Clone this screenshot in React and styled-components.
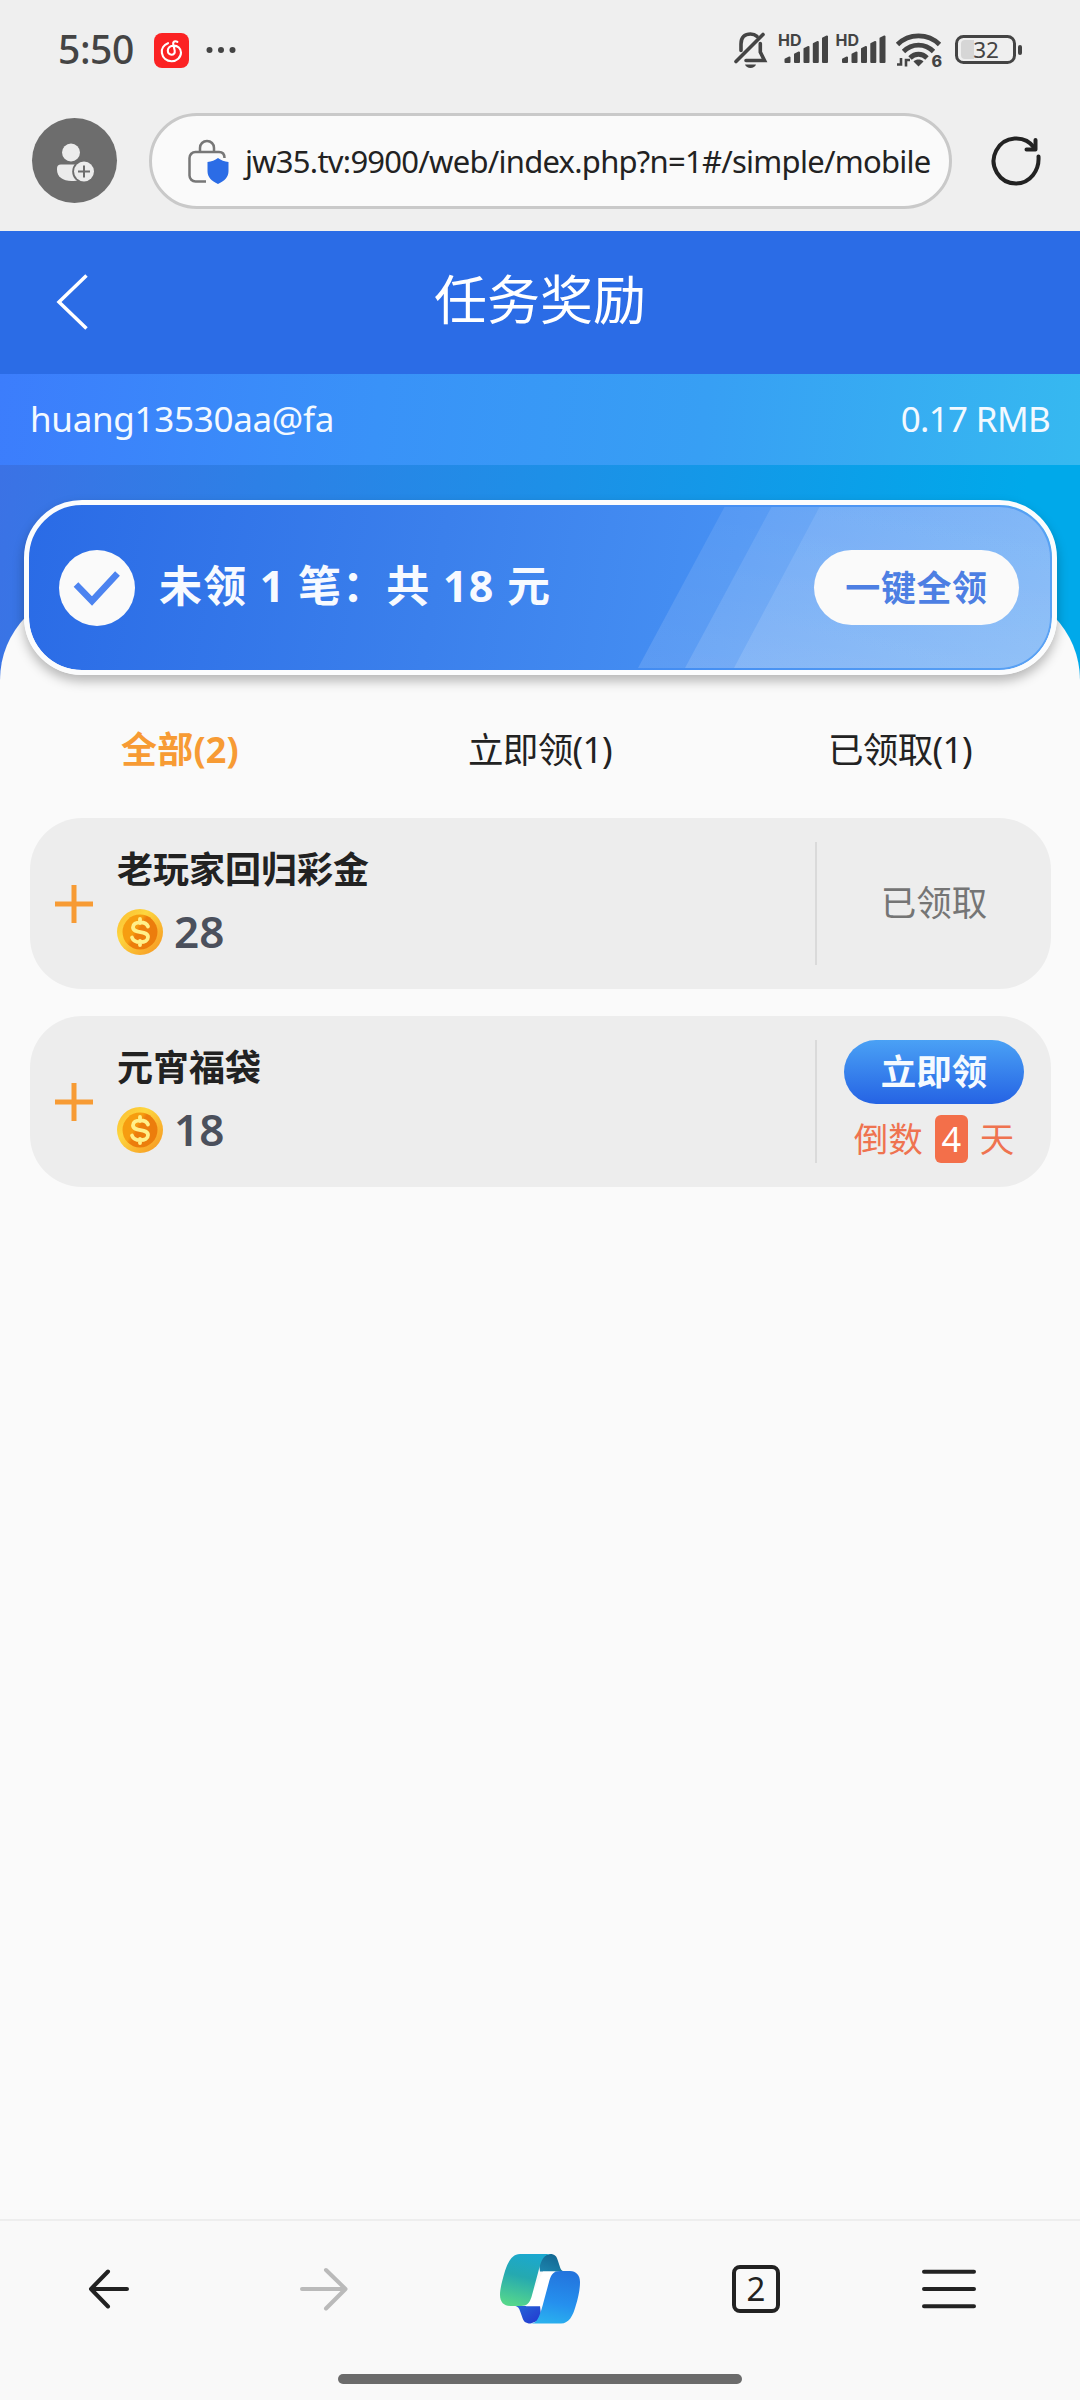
import styled, { createGlobalStyle } from 'styled-components';

const GlobalStyle = createGlobalStyle`
  * {
    box-sizing: border-box;
  }

  body {
    margin: 0;
    background: #fafafa;
    color: #222;
    font-family: 'Noto Sans', 'Noto Sans CJK SC', sans-serif;
  }

  svg {
    display: block;
    flex: none;
  }

  button {
    border: none;
    padding: 0;
    background: none;
    font-family: inherit;
    color: inherit;
  }
`;

const Screen = styled.div`
  width: 1080px;
  height: 2400px;
  display: flex;
  flex-direction: column;
  overflow: hidden;
  background: #fafafa;
`;

const StatusBar = styled.div`
  height: 100px;
  flex: none;
  display: flex;
  align-items: center;
  padding: 0 57px 0 58px;
  background: #efefef;
`;

const Clock = styled.span`
  width: 96px;
  margin-top: -2px;
  font-size: 39px;
  font-weight: 500;
  line-height: 40px;
  color: #444;
  letter-spacing: -0.4px;
  white-space: nowrap;
`;

const StatusIcons = styled.div`
  margin-left: auto;
`;

const BrowserBar = styled.div`
  height: 131px;
  flex: none;
  display: flex;
  align-items: flex-start;
  padding: 13px 39px 0 32px;
  background: #efefef;
`;

const Avatar = styled.button`
  width: 85px;
  height: 85px;
  margin-top: 5px;
  border-radius: 50%;
  background: #6d6d6d;
`;

const AddressField = styled.div`
  width: 803px;
  height: 96px;
  margin-left: 32px;
  padding-left: 34px;
  display: flex;
  align-items: center;
  border: 3px solid #c9c9c9;
  border-radius: 48px;
  background: #fafafa;
`;

const Url = styled.span`
  margin-left: 16px;
  font-size: 31px;
  color: #222;
  letter-spacing: -0.75px;
  white-space: nowrap;
`;

const Reload = styled.button`
  margin: 23px 0 0 auto;
`;

const PageHeader = styled.header`
  height: 143px;
  flex: none;
  display: grid;
  grid-template-columns: 150px 1fr 150px;
  align-items: center;
  background: #2b6ce6;
  color: #fff;
`;

const BackButton = styled.button`
  padding: 0 0 2px 54px;
`;

const PageTitle = styled.h1`
  margin: 0 0 5px;
  text-align: center;
  font-size: 53px;
  font-weight: 400;
  line-height: 60px;
`;

const AccountBar = styled.div`
  height: 91px;
  flex: none;
  display: flex;
  justify-content: space-between;
  align-items: center;
  padding: 0 30px 3px;
  background: linear-gradient(97deg, #3c7dfc 0%, #3992f8 35%, #379ff4 65%, #36b9f0 100%);
  color: #f3f9ff;
  font-size: 35px;
`;

const AccountName = styled.span`
  letter-spacing: -0.3px;
`;

const Balance = styled.span`
  letter-spacing: -0.7px;
`;

const Stage = styled.main`
  flex: 1;
  padding-top: 35px;
  background: linear-gradient(100deg, #3b72e5 0%, #1d90e7 50%, #00a9ea 92%) 0 0 / 100% 230px no-repeat;
`;

const Summary = styled.section`
  position: relative;
  z-index: 1;
  width: 1033px;
  height: 175px;
  margin-left: 24px;
  padding: 0 33px 0 30px;
  display: flex;
  align-items: center;
  border: 5px solid #fbfcfd;
  border-radius: 58px;
  background: linear-gradient(100deg, #2a6be6 0%, #3b80ec 40%, #4690f3 68%, #5aa2f4 100%);
  background-clip: padding-box;
  box-shadow: 0 6px 12px rgba(0, 0, 0, 0.28);
`;

const Stripes = styled.svg`
  position: absolute;
  top: 2px;
  right: 2px;
  border-radius: 0 51px 51px 0;
`;

const SummaryText = styled.strong`
  margin: 0 0 4px 24px;
  font-size: 43px;
  font-weight: 700;
  line-height: 60px;
  color: #f7faff;
  letter-spacing: 1.2px;
  white-space: nowrap;
`;

const ClaimAll = styled.button`
  position: relative;
  width: 205px;
  height: 75px;
  margin-left: auto;
  padding-bottom: 5px;
  border-radius: 38px;
  background: #fafafa;
  color: #4d7fe3;
  font-size: 35px;
  font-weight: 700;
  letter-spacing: 0.6px;
`;

const Sheet = styled.section`
  height: 1629px;
  margin-top: -85px;
  padding-top: 85px;
  border-radius: 90px 90px 0 0;
  background: #fafafa;
`;

const Tabs = styled.nav`
  height: 143px;
  padding-top: 2px;
  display: grid;
  grid-template-columns: repeat(3, 1fr);
  align-items: center;
`;

const Tab = styled.button`
  font-size: ${({ $active }) => ($active ? 36 : 35.5)}px;
  font-weight: ${({ $active }) => ($active ? 700 : 400)};
  color: ${({ $active }) => ($active ? '#f79b34' : '#222')};
  letter-spacing: ${({ $active }) => ($active ? 0.2 : -0.7)}px;
`;

const TaskList = styled.ul`
  margin: 0;
  padding: 0 29px 0 30px;
  display: grid;
  gap: 27px;
  list-style: none;
`;

const Task = styled.li`
  height: 171px;
  display: flex;
  align-items: center;
  padding-left: 25px;
  border-radius: 52px;
  background: #ededed;
`;

const TaskBody = styled.div`
  height: 171px;
  padding-top: 27px;
  margin-left: 24px;
  flex: 1;
`;

const TaskName = styled.div`
  font-size: 36px;
  font-weight: 600;
  line-height: 44px;
  font-family: 'Noto Sans CJK SC', sans-serif;
`;

const Reward = styled.div`
  display: flex;
  align-items: center;
  gap: 11px;
  margin-top: 20px;
  height: 46px;
`;

const Amount = styled.span`
  font-size: 44px;
  font-weight: 600;
  line-height: 46px;
  padding-bottom: 2px;
  color: #4b505c;
`;

const TaskAction = styled.div`
  width: 236px;
  height: 123px;
  display: flex;
  flex-direction: column;
  align-items: center;
  justify-content: center;
  border-left: 2px solid #dadada;
`;

const Claimed = styled.span`
  font-size: 35.5px;
  line-height: 40px;
  color: #757575;
  padding-bottom: 3px;
`;

const Claim = styled.button`
  width: 180px;
  height: 67px;
  padding-bottom: 6px;
  border-radius: 34px;
  background: linear-gradient(#4aa1f5, #2563e4);
  color: #f5faff;
  font-size: 35.5px;
  font-weight: 700;
`;

const Countdown = styled.div`
  height: 48px;
  margin-top: 11px;
  display: flex;
  align-items: center;
  gap: 12px;
  font-size: 34.5px;
  line-height: 48px;
  color: #ef7350;
`;

const Days = styled.span`
  width: 33px;
  height: 48px;
  border-radius: 6px;
  background: #f36f4a;
  color: #fff;
  text-align: center;
`;

const NavBar = styled.footer`
  height: 181px;
  flex: none;
  display: flex;
  flex-direction: column;
  align-items: center;
  border-top: 2px solid #eee;
  background: #f9f9f9;
`;

const NavItems = styled.div`
  width: 100%;
  height: 135px;
  padding: 0 104px 0 88px;
  display: flex;
  align-items: center;
`;

const NavButton = styled.button`
  margin-left: ${({ $gap }) => $gap || 0}px;
`;

const TabCount = styled.span`
  width: 48px;
  height: 48px;
  display: grid;
  place-items: center;
  border: 4px solid #222;
  border-radius: 8px;
  font-size: 33px;
  line-height: 38px;
`;

const HomeIndicator = styled.div`
  width: 404px;
  height: 10px;
  margin-top: 18px;
  border-radius: 5px;
  background: #6b6b6b;
`;

const MusicIcon = () => (
  <svg width="35" height="35" viewBox="0 0 35 35">
    <rect width="35" height="35" rx="8" fill="#fb2223" />
    <path
      d="M14 10.2C9.8 11.8 7.2 15.6 7.9 20c.8 4.9 4.700 8.200 9.700 8.200 5.200 0 9.400-3.700 9.400-8.600 0-4-3.400-7-7.300-7-3.400 0-5.900 2.200-5.900 5 0 2.400 1.600 4.100 3.700 4.100 2.300 0 3.600-1.800 3.200-4.100l-1.500-6.600c-.5-2.200 2-3.700 4.200-2.100"
      fill="none"
      stroke="#fff"
      strokeWidth="2.1"
      strokeLinecap="round"
    />
  </svg>
);

const DotsIcon = styled.svg`
  margin-left: 17px;
`;

const MoreIcon = () => (
  <DotsIcon width="30" height="8" viewBox="0 0 30 8" fill="#444">
    <circle cx="3.5" cy="4" r="3" />
    <circle cx="15" cy="4" r="3" />
    <circle cx="26.5" cy="4" r="3" />
  </DotsIcon>
);

const Signal = ({ x }) => (
  <g transform={`translate(${x} 0)`}>
    <text x="-1.5" y="15.5" fontSize="16" fontWeight="700" fontFamily="Inter">
      HD
    </text>
    <g stroke="#444" strokeWidth="2" strokeLinejoin="round">
      <path d="M6 29.500l4-2v4.500h-4z" />
      <path d="M15.500 24.500l4-2v9.500h-4z" />
      <path d="M25 19l4-2v15h-4z" />
      <path d="M34.300 14l4-2v20h-4z" />
      <path d="M43.500 8.500l4-2v25.500h-4z" />
    </g>
  </g>
);

const StatusGlyphs = () => (
  <svg width="290" height="40" viewBox="0 0 290 40" fill="#444">
    <g fill="none" stroke="#444" strokeWidth="3.6" strokeLinecap="round">
      <path d="M8 20.500V14C8 7 12 4 17.500 4c2.700 0 4.800.8 6.500 2.300" />
      <path d="M27.300 13.500v8.500l4.200 8.500H13" />
      <path d="M3 31.500 30 4.500" />
    </g>
    <path d="M12 34.500h11c-.8 2.200-2.800 3.500-5.500 3.500s-4.700-1.300-5.500-3.500z" />
    <Signal x={46.5} />
    <Signal x={104} />
    <g fill="none" stroke="#444" strokeWidth="4.8">
      <path d="M164.500 14.500c11.500-11.500 30.500-11.500 42 0" />
      <path d="M170.500 21.500c8.500-8.500 21.500-8.500 30 0" />
      <path d="M177 28c5-5 12-5 17 0" />
    </g>
    <path d="M180.500 31.500c3-2.600 7-2.600 10 0l-5 5z" />
    <path d="M168 28v6.500h-4M173 36.500v-6.500h4" fill="none" stroke="#444" strokeWidth="2.6" />
    <text x="198.5" y="36.500" fontSize="16" fontWeight="800" fontFamily="Inter">
      6
    </text>
    <rect x="223.5" y="6.500" width="58" height="26" rx="7" fill="none" stroke="#444" strokeWidth="3" />
    <path d="M232 10h9v19h-9a4 4 0 0 1-4-4V14a4 4 0 0 1 4-4z" fill="#d6d6d6" />
    <rect x="285" y="15" width="4" height="10" rx="2" />
    <text x="253" y="28" fontSize="22.5" textAnchor="middle" fontFamily="Noto Sans">
      32
    </text>
  </svg>
);

const AddUserIcon = () => (
  <svg width="85" height="85" viewBox="0 0 85 85" fill="#ececec">
    <circle cx="39" cy="34.500" r="9" />
    <path d="M29 46.500h20v15.500c-3 .8-6.500 1-9.500 1C31 63 25 59 25 51.500v-1a4 4 0 0 1 4-4z" />
    <circle cx="52" cy="53.500" r="11.800" fill="#6d6d6d" />
    <circle cx="52" cy="53.500" r="10" />
    <path d="M52 47.500v12M46 53.500h12" stroke="#6d6d6d" strokeWidth="2" />
  </svg>
);

const LockIcon = () => (
  <svg width="43" height="48" viewBox="0 0 43 48">
    <path
      d="M20 44.500H9.500a6 6 0 0 1-6-6V21a6 6 0 0 1 6-6H33c3.500 0 5.500 2 5.500 6"
      fill="none"
      stroke="#777"
      strokeWidth="2.5"
    />
    <path d="M14 15v-4c0-4 3-7 7-7s7 3 7 7v4" fill="none" stroke="#777" strokeWidth="2.5" />
    <path d="M32 21c3 2.500 6.500 3.500 10.500 4v9c0 6-4 10-10.500 13-6.500-3-10.500-7-10.500-13v-9c4-.5 7.500-1.500 10.500-4z" fill="#2b6ce6" />
  </svg>
);

const ReloadIcon = () => (
  <svg width="50" height="50" viewBox="0 0 50 50" fill="none" stroke="#222" strokeWidth="4" strokeLinecap="round" strokeLinejoin="round">
    <path d="M47.500 20.500C48.500 34.500 39 47.500 25 47.500A22.500 22.500 0 1 1 43.500 12" />
    <path d="M44.500 4v9.500h-9" />
  </svg>
);

const ChevronIcon = () => (
  <svg width="36" height="58" viewBox="0 0 36 58" fill="none" stroke="#fff" strokeWidth="3.5">
    <path d="M32.500 2.500 5 29l27.500 26.500" />
  </svg>
);

const CheckIcon = () => (
  <svg width="76" height="76" viewBox="0 0 76 76">
    <circle cx="38" cy="38" r="38" fill="#fafafa" />
    <path d="m17 34.500 16 16.500 25.500-27.500" fill="none" stroke="#4c83f0" strokeWidth="6.5" />
  </svg>
);

const PlusIcon = () => (
  <svg width="38" height="38" viewBox="0 0 38 38">
    <path d="M19 0v38M0 19h38" stroke="#f79b34" strokeWidth="5" />
  </svg>
);

const CoinIcon = () => (
  <svg width="46" height="46" viewBox="0 0 46 46">
    <defs>
      <linearGradient id="coinRim" x1="0" y1="0" x2="1" y2="1">
        <stop offset="0" stopColor="#fbb92f" />
        <stop offset="0.35" stopColor="#fdd63f" />
        <stop offset="1" stopColor="#f6921f" />
      </linearGradient>
      <linearGradient id="coinFace" x1="0" y1="0" x2="1" y2="0.6">
        <stop offset="0.45" stopColor="#f69d10" />
        <stop offset="0.55" stopColor="#ec7d0c" />
      </linearGradient>
    </defs>
    <circle cx="23" cy="23" r="23" fill="url(#coinRim)" />
    <circle cx="23" cy="23" r="17.500" fill="url(#coinFace)" />
    <path
      d="M23 10v4M23 32v4M31 17.500c-1-2.800-4-4.200-7.800-4.200-4.200 0-7.200 1.900-7.200 4.900 0 7 15 2.800 15 9.800 0 3.200-3.300 5.200-7.600 5.200-4.200 0-7.400-1.700-8.400-4.700"
      fill="none"
      stroke="#fff08a"
      strokeWidth="3.8"
      strokeLinecap="round"
    />
  </svg>
);

const ArrowLeftIcon = () => (
  <svg width="41" height="42" viewBox="0 0 41 42" fill="none" stroke="#222" strokeWidth="4" strokeLinecap="round" strokeLinejoin="round">
    <path d="M39 21H3M20 3.500 3 21l17 17.500" />
  </svg>
);

const ArrowRightIcon = () => (
  <svg width="48" height="44" viewBox="0 0 48 44" fill="none" stroke="#bababa" strokeWidth="4" strokeLinecap="round" strokeLinejoin="round">
    <path d="M2 22h43M26 3l19.500 19L26 41.500" />
  </svg>
);

const CopilotIcon = () => (
  <svg width="80" height="70" viewBox="0 0 80 70">
    <defs>
      <linearGradient id="leafTeal" x1="0.6" y1="0" x2="0.35" y2="1">
        <stop offset="0" stopColor="#1ba8cf" />
        <stop offset="0.45" stopColor="#25a9b0" />
        <stop offset="1" stopColor="#55d68c" />
      </linearGradient>
      <linearGradient id="leafBlue" x1="0.6" y1="0" x2="0.4" y2="1">
        <stop offset="0" stopColor="#2374dd" />
        <stop offset="0.6" stopColor="#2590ee" />
        <stop offset="1" stopColor="#2ab0ee" />
      </linearGradient>
      <linearGradient id="foldTop" x1="0.8" y1="0" x2="0.2" y2="1">
        <stop offset="0" stopColor="#12648f" />
        <stop offset="1" stopColor="#1c84ad" />
      </linearGradient>
      <linearGradient id="foldBottom" x1="0" y1="0" x2="1" y2="1">
        <stop offset="0" stopColor="#2568d8" />
        <stop offset="1" stopColor="#2335cf" />
      </linearGradient>
    </defs>
    <path d="M40 17.500h24c-2.500-.7-3.500-2.500-4.200-5l-1.800-5.500C56.500 2 55 0 50 0L38 3z" fill="url(#foldTop)" />
    <path d="M40 52H15.500c2.500.7 3.800 2.500 4.500 5l2 5.500c1.500 5 3.500 7 8.500 7l11-4z" fill="url(#foldBottom)" />
    <path d="M43 17.500h12L43 52.300H26z" fill="#fff" />
    <path d="M52 0H20C12 0 8 8 5 17 2 27 0 35 0 41c0 7 4 11 10 11h11c6 0 8.500-3 10.500-9l7-26C41.500 5 44 0 52 0z" fill="url(#leafTeal)" />
    <path d="M30 69.500h31c8 0 12-8 14.500-17C78.500 43 80 35 80 28c0-7-4-11-10-11H60c-6 0-8.500 3-10.500 9l-7 26C39 64 37 69.500 30 69.500z" fill="url(#leafBlue)" />
  </svg>
);

const MenuIcon = () => (
  <svg width="54" height="40" viewBox="0 0 54 40" stroke="#222" strokeWidth="4" strokeLinecap="round">
    <path d="M2 2.700h50M2 20h50M2 37.300h50" />
  </svg>
);

const tabs = ['全部(2)', '立即领(1)', '已领取(1)'];

const tasks = [
  { id: 1, name: '老玩家回归彩金', amount: 28, claimed: true },
  { id: 2, name: '元宵福袋', amount: 18, claimed: false, days: 4 },
];

const TaskItem = ({ task }) => (
  <Task>
    <PlusIcon />
    <TaskBody>
      <TaskName>{task.name}</TaskName>
      <Reward>
        <CoinIcon />
        <Amount>{task.amount}</Amount>
      </Reward>
    </TaskBody>
    <TaskAction>
      {task.claimed ? (
        <Claimed>已领取</Claimed>
      ) : (
        <>
          <Claim>立即领</Claim>
          <Countdown>
            倒数 <Days>{task.days}</Days> 天
          </Countdown>
        </>
      )}
    </TaskAction>
  </Task>
);

const App = () => (
  <>
    <GlobalStyle />
    <Screen>
      <StatusBar>
        <Clock>5:50</Clock>
        <MusicIcon />
        <MoreIcon />
        <StatusIcons>
          <StatusGlyphs />
        </StatusIcons>
      </StatusBar>
      <BrowserBar>
        <Avatar>
          <AddUserIcon />
        </Avatar>
        <AddressField>
          <LockIcon />
          <Url>jw35.tv:9900/web/index.php?n=1#/simple/mobile</Url>
        </AddressField>
        <Reload>
          <ReloadIcon />
        </Reload>
      </BrowserBar>
      <PageHeader>
        <BackButton>
          <ChevronIcon />
        </BackButton>
        <PageTitle>任务奖励</PageTitle>
      </PageHeader>
      <AccountBar>
        <AccountName>huang13530aa@fa</AccountName>
        <Balance>0.17 RMB</Balance>
      </AccountBar>
      <Stage>
        <Summary>
          <Stripes width="412" height="161" viewBox="0 0 412 161">
            <defs>
              <linearGradient id="sheen" x1="0" y1="0" x2="0" y2="1">
                <stop offset="0" stopColor="#fff" stopOpacity="0.09" />
                <stop offset="1" stopColor="#fff" stopOpacity="0.13" />
              </linearGradient>
            </defs>
            <path d="M86.500 0H412v161H0z" fill="url(#sheen)" />
            <path d="M133.500 0H412v161H47z" fill="url(#sheen)" />
            <path d="M181.500 0H412v161H96z" fill="url(#sheen)" />
          </Stripes>
          <CheckIcon />
          <SummaryText>未领 1 笔：共 18 元</SummaryText>
          <ClaimAll>一键全领</ClaimAll>
        </Summary>
        <Sheet>
          <Tabs>
            {tabs.map((label, i) => (
              <Tab key={label} $active={i === 0}>
                {label}
              </Tab>
            ))}
          </Tabs>
          <TaskList>
            {tasks.map((task) => (
              <TaskItem key={task.id} task={task} />
            ))}
          </TaskList>
        </Sheet>
      </Stage>
      <NavBar>
        <NavItems>
          <NavButton>
            <ArrowLeftIcon />
          </NavButton>
          <NavButton $gap={171}>
            <ArrowRightIcon />
          </NavButton>
          <NavButton $gap={152}>
            <CopilotIcon />
          </NavButton>
          <NavButton $gap={152}>
            <TabCount>2</TabCount>
          </NavButton>
          <NavButton $gap={142}>
            <MenuIcon />
          </NavButton>
        </NavItems>
        <HomeIndicator />
      </NavBar>
    </Screen>
  </>
);

export default App;
